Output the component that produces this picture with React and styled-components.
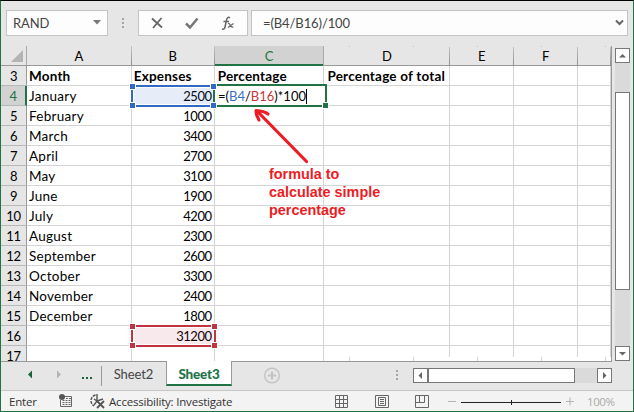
import React from 'react';
import styled, { createGlobalStyle } from 'styled-components';

const GREEN = '#217346';

const GlobalStyle = createGlobalStyle`
  * { box-sizing: border-box; }
  body { margin: 0; overflow: hidden; }
`;

const Window = styled.div`
  width: 634px;
  height: 412px;
  display: flex;
  flex-direction: column;
  background: #e6e6e6;
  border: 1px solid ${GREEN};
  border-top-color: #000;
  font-family: Lato, sans-serif;
  font-size: 13px;
  color: #000;
  white-space: nowrap;
`;

const FormulaBar = styled.div`
  display: flex;
  height: 45px;
  padding: 9px 4px 9px 5px;
  color: #444;
`;

const Field = styled.div`
  display: flex;
  align-items: center;
  justify-content: space-between;
  width: ${(p) => p.$width}px;
  height: 26px;
  padding: ${(p) => p.$padding};
  margin-left: ${(p) => p.$gap || 0}px;
  background: #fdfdfd;
  border: 1px solid #c3c3c3;
  letter-spacing: ${(p) => p.$spacing || 0}px;
`;

const Grip = styled.div`
  display: flex;
  flex-direction: column;
  gap: 2px;
  width: 30px;
  padding: ${(p) => p.$padding};
  i { width: 2px; height: 2px; background: #a6a6a6; }
`;

const Main = styled.div`
  display: flex;
  height: 315px;
`;

const Sheet = styled.div`
  position: relative;
  width: 611px;
  height: 315px;
  overflow: hidden;
  border-right: 1px solid #999;
`;

const HeaderRow = styled.div`
  display: flex;
  height: 20px;
  line-height: 20px;
  border-bottom: 1px solid #999;
`;

const Corner = styled.div`
  width: 26px;
  height: 19px;
  border-right: 1px solid #aaa;
  svg { display: block; }
`;

const ColumnHead = styled.div`
  width: ${(p) => p.$width}px;
  height: ${(p) => (p.$active ? 20 : 19)}px;
  text-align: center;
  color: ${(p) => (p.$active ? GREEN : '#000')};
  background: ${(p) => (p.$active ? '#d2d2d2' : '#e6e6e6')};
  border-right: 1px solid;
  border-image: linear-gradient(#c8c8c8, #8c8c8c) 1;
  ${(p) => p.$active && `border-image: none; border-right-color: #aaa; box-shadow: inset 0 -2px ${GREEN};`}
`;

const Row = styled.div`
  display: flex;
  height: 20px;
  line-height: 21px;
`;

const RowHead = styled.div`
  width: 26px;
  text-align: center;
  letter-spacing: -0.4px;
  color: ${(p) => (p.$active ? GREEN : '#000')};
  background: ${(p) => (p.$active ? '#d2d2d2' : '#e6e6e6')};
  border-right: ${(p) => (p.$active ? `2px solid ${GREEN}` : '1px solid #999')};
  border-bottom: 1px solid #b8b8b8;
`;

const Cell = styled.div`
  width: ${(p) => p.$width}px;
  padding: 0 2px;
  overflow: hidden;
  background: #fff;
  border-right: 1px solid #d4d4d4;
  border-bottom: 1px solid #d4d4d4;
  text-align: ${(p) => (p.$number ? 'right' : 'left')};
  font-weight: ${(p) => (p.$bold ? 700 : 400)};
  font-size: ${(p) => (p.$number ? 13 : 13.5)}px;
  letter-spacing: ${(p) => (p.$number ? -0.45 : p.$bold ? 0.2 : 0.27)}px;
  &:nth-child(n + 4) { padding-left: 3px; }
`;

const RangeFrame = styled.div`
  position: absolute;
  left: 130px;
  top: ${(p) => p.$top}px;
  width: 85px;
  height: 22px;
  border: 2px solid ${(p) => p.$color};
  box-shadow: ${(p) => (p.$open ? 'none' : 'inset 0 0 0 1px #fff')};
  background: ${(p) => p.$tint} padding-box;
  ${(p) => p.$open && `
    width: 84px;
    border-right-color: transparent;
    box-shadow: inset 1px 1px #fff, inset 0 -1px #fff;
  `}
`;

const Handle = styled.i`
  position: absolute;
  width: 5px;
  height: 5px;
  background: ${(p) => p.$color};
  outline: 1px solid #fff;
  ${(p) => p.$v}: -3px;
  ${(p) => p.$h}: -3px;
`;

const Editor = styled.div`
  position: absolute;
  left: 212px;
  top: 38px;
  width: 114px;
  height: 23px;
  padding-left: 3px;
  border: 2px solid ${GREEN};
  background: #fff;
  line-height: 20px;
`;

const Ref = styled.span`
  color: ${(p) => p.$color};
`;

const Caret = styled.i`
  display: inline-block;
  width: 1px;
  height: 15px;
  background: #000;
  vertical-align: -3px;
`;

const EdgeStrip = styled.div`
  position: absolute;
  left: 324px;
  width: 286px;
  height: ${(p) => p.$height}px;
  ${(p) => p.$edge}: 0;
  background: repeating-linear-gradient(90deg, transparent 0 24px, ${(p) => p.$tick} 24px 25px, transparent 25px 64px), ${(p) => p.$fill};
`;

const Note = styled.div`
  position: absolute;
  left: 268px;
  top: 119px;
  color: #ed1c24;
  font: bold 14.4px/18px "Liberation Sans", Arial, sans-serif;
`;

const Arrow = styled.svg`
  position: absolute;
  left: 250px;
  top: 60px;
`;

const VerticalScroll = styled.div`
  display: flex;
  flex-direction: column;
  width: 15px;
  height: 315px;
  margin-left: 3px;
  padding-top: 2px;
`;

const ScrollButton = styled.div`
  display: flex;
  align-items: center;
  justify-content: center;
  flex: none;
  width: 15px;
  height: 15px;
  border: 1px solid #777;
  background: #fff;
`;

const Track = styled.div`
  flex: 1;
  background: #dadada;
  padding: ${(p) => p.$padding};
`;

const Thumb = styled.div`
  width: ${(p) => p.$width}px;
  height: ${(p) => p.$height}px;
  background: #fff;
  border: 1px solid #777;
`;

const TabBar = styled.div`
  display: flex;
  height: 29px;
  border-top: 1px solid #999;
  width: 611px;
`;

const TabNav = styled.div`
  width: 100px;
  height: 28px;
  svg { display: block; }
`;

const Tab = styled.div`
  width: ${(p) => p.$width}px;
  height: ${(p) => (p.$active ? 25 : 28)}px;
  margin-top: ${(p) => (p.$active ? -1 : 0)}px;
  line-height: ${(p) => (p.$active ? 26 : 25)}px;
  text-align: center;
  color: ${(p) => (p.$active ? GREEN : '#444')};
  font-weight: ${(p) => (p.$active ? 900 : 400)};
  font-size: ${(p) => (p.$active ? 13.5 : 13)}px;
  letter-spacing: ${(p) => (p.$active ? -0.2 : -0.1)}px;
  ${(p) => p.$active && `
    background: #fff;
    border-left: 1px solid #999;
    border-right: 1px solid #999;
    border-bottom: 2px solid ${GREEN};
  `}
`;

const AddSheet = styled.div`
  width: 151px;
  padding: 5px 0 0 32px;
`;

const HorizontalScroll = styled.div`
  display: flex;
  height: 15px;
  margin-top: 6px;
  width: 199px;
`;

const StatusBar = styled.div`
  display: flex;
  align-items: center;
  height: 21px;
  background: #f3f3f3;
  border-top: 1px solid #c6c6c6;
  font: 11.5px "Open Sans", "Noto Sans", sans-serif;
`;

const StatusText = styled.span`
  width: ${(p) => p.$width}px;
  padding-left: ${(p) => p.$left || 0}px;
  letter-spacing: ${(p) => p.$spacing}px;
  color: ${(p) => p.$color || '#333'};
`;

const StatusIcon = styled.svg`
  flex: none;
  margin-right: ${(p) => p.$right || 0}px;
`;

const COLUMNS = [
  ['A', 105], ['B', 83], ['C', 110], ['D', 126], ['E', 64], ['F', 64], ['', 33],
];

const ROWS = [
  [3, 'Month', 'Expenses', 'Percentage', 'Percentage of total'],
  [4, 'January', 2500],
  [5, 'February', 1000],
  [6, 'March', 3400],
  [7, 'April', 2700],
  [8, 'May', 3100],
  [9, 'June', 1900],
  [10, 'July', 4200],
  [11, 'August', 2300],
  [12, 'September', 2600],
  [13, 'October', 3300],
  [14, 'November', 2400],
  [15, 'December', 1800],
  [16, '', 31200],
  [17],
];

const Handles = ({ color }) =>
  ['top', 'bottom'].map((v) => ['left', 'right'].map((h) => <Handle key={v + h} $v={v} $h={h} $color={color} />));

const Triangle = ({ dir }) => (
  <svg width="9" height="9" viewBox="0 0 9 9" fill="#666">
    <path d={{ up: 'M1 6.5h7L4.5 3z', down: 'M1 3h7L4.5 6.5z', left: 'M6 1v7L2.5 4.5z', right: 'M3 1v7l3.5-3.5z' }[dir]} />
  </svg>
);

const Dots = ({ padding }) => <Grip $padding={padding}><i /><i /><i /></Grip>;

export default function App() {
  return (
    <Window>
      <GlobalStyle />
      <FormulaBar>
        <Field $width={102} $padding="0 6px" $spacing={-0.1}>
          <span>RAND</span>
          <svg width="8" height="6"><path d="M0 0h8L4 4.5z" fill="#777" /></svg>
        </Field>
        <Dots padding="8px 0 0 14px" />
        <Field $width={110} $padding="0 12px">
          <svg width="12" height="12" fill="none" stroke="#666"><path d="M1 1.5L11 10.500M10.500 1L2 11" strokeWidth="1.8" /></svg>
          <svg width="14" height="12" fill="none" stroke="#777"><path d="M1 6.500L5 10.500L12.500 1.500" strokeWidth="2.5" /></svg>
          <svg width="14" height="15" fill="none" stroke="#666">
            <path d="M9 1.800C7 .5 5.800 2 5.300 5L4 11Q3.300 14 1 13M2.500 5.500H8" strokeWidth="1.500" />
            <path d="M7 7.500Q8.500 7 9.200 9.200T12.500 11M12.500 7.500L7 11.500" strokeWidth="1.200" />
          </svg>
        </Field>
        <Field $width={377} $gap={3} $padding="0 3px 0 11px" $spacing={-0.1}>
          <span>=(B4/B16)/100</span>
          <svg width="9" height="8" fill="none" stroke="#666" strokeWidth="2"><path d="M1 1.500L4.500 5L8 1.500" /></svg>
        </Field>
      </FormulaBar>

      <Main>
        <Sheet>
          <HeaderRow>
            <Corner><svg width="25" height="19"><path d="M22 4V16H10z" fill="#b4b4b4" /></svg></Corner>
            {COLUMNS.map(([name, width], i) => (
              <ColumnHead key={i} $width={width} $active={name === 'C'}>{name}</ColumnHead>
            ))}
          </HeaderRow>
          {ROWS.map(([number, ...values]) => (
            <Row key={number}>
              <RowHead $active={number === 4}>{number}</RowHead>
              {COLUMNS.map(([, width], i) => (
                <Cell key={i} $width={width} $bold={number === 3} $number={typeof values[i] === 'number'}>
                  {values[i]}
                </Cell>
              ))}
            </Row>
          ))}
          <EdgeStrip $edge="top" $height={1} $tick="#c4c4c4" $fill="#e6e6e6" />
          <EdgeStrip $edge="bottom" $height={4} $tick="#d4d4d4" $fill="#fff" />
          <Editor>
            =(<Ref $color="#3a6fc9">B4</Ref>/<Ref $color="#c8353d">B16</Ref>)*100<Caret />
            <Handle $v="bottom" $h="right" $color={GREEN} />
          </Editor>
          <RangeFrame $top={39} $color="#316ac5" $tint="rgba(49,106,197,.12)" $open><Handles color="#316ac5" /></RangeFrame>
          <RangeFrame $top={279} $color="#be3440" $tint="rgba(190,52,64,.1)"><Handles color="#be3440" /></RangeFrame>
          <Arrow width="65" height="60" fill="none" stroke="#ed1c24" strokeWidth="3.200" strokeLinecap="round" strokeLinejoin="round">
            <path d="M55.500 55.500L6 5M17 8Q13 5 5 4.500Q5 9 8 14" />
          </Arrow>
          <Note>formula to<br />calculate simple<br />percentage</Note>
        </Sheet>
        <VerticalScroll>
          <ScrollButton><Triangle dir="up" /></ScrollButton>
          <Track $padding="29px 0 0"><Thumb $width={15} $height={198} /></Track>
          <ScrollButton><Triangle dir="down" /></ScrollButton>
        </VerticalScroll>
      </Main>

      <TabBar>
        <TabNav>
          <svg width="101" height="28">
            <path d="M31 8.500v8L27 12.500z" fill="#17633a" />
            <path d="M56 8.500v8L60 12.500z" fill="#b4b4b4" />
            <path d="M81 15h2v2h-2zM85 15h2v2h-2zM89 15h2v2h-2z" fill="#17633a" />
            <path d="M100.500 4v20" stroke="#999" />
          </svg>
        </TabNav>
        <Tab $width={65}>Sheet2</Tab>
        <Tab $width={66} $active>Sheet3</Tab>
        <AddSheet>
          <svg width="17" height="17" fill="none" stroke="#c3c3c3">
            <circle cx="8" cy="8.500" r="7.300" strokeWidth="1.400" /><path d="M4 8.500h8M8 4.500v8" strokeWidth="2" />
          </svg>
        </AddSheet>
        <Dots padding="8px 0 0 13px" />
        <HorizontalScroll>
          <ScrollButton><Triangle dir="left" /></ScrollButton>
          <Track><Thumb $width={147} $height={15} /></Track>
          <ScrollButton><Triangle dir="right" /></ScrollButton>
        </HorizontalScroll>
      </TabBar>

      <StatusBar>
        <StatusText $width={58} $left={8} $spacing={-0.2}>Enter</StatusText>
        <StatusIcon $right={16} width="14" height="14">
          <path d="M5 2.500H12.500V12.500H1.500V6" fill="#f3f3f3" stroke="#666" />
          <circle cx="3" cy="3" r="3" fill="#555" />
          <path d="M7 4.500h5M3.500 6.500h8M3.500 8.500h8M3.500 10.500h8" stroke="#666" strokeDasharray="2 1" />
        </StatusIcon>
        <StatusIcon $right={3} width="17" height="16" fill="none" stroke="#555">
          <path d="M6.500 2A6 6 0 0 0 5 13" strokeDasharray="3 1" strokeWidth="1.400" />
          <path d="M8 1v7M5 6l3 2 6-2M8 8L5 12" strokeWidth="1.400" />
          <path d="M8 8L15 15M15 8L8 15" strokeWidth="1.800" />
        </StatusIcon>
        <StatusText $width={226} $spacing={-0.2}>Accessibility: Investigate</StatusText>
        <StatusIcon $right={27} width="13" height="13" fill="none" stroke="#666">
          <path d="M.5.5h12v12H.5zM4.500.5v12M8.500.5v12M.5 4.500h12M.5 8.500h12" />
        </StatusIcon>
        <StatusIcon $right={26} width="14" height="13" fill="none" stroke="#666">
          <path d="M.5.5h13v12H.5zM3.500 2.500h7v8h-7zM5 4.500h4M5 6.500h4M5 8.500h4" />
        </StatusIcon>
        <StatusIcon $right={19} width="14" height="13" fill="none" stroke="#666">
          <path d="M.5.5h13v12H.5zM4.500.5v7M9.500.5v7M.5 7.500h9" />
        </StatusIcon>
        <StatusIcon $right={13} width="126" height="13" fill="none" stroke="#b4b4b4">
          <path d="M0 6.500h8M118 6.500h8M122 2.500v8" />
          <path d="M13 7.500h100M63.500 5v5" stroke="#222" />
        </StatusIcon>
        <StatusText $width={40} $spacing={-0.4} $color="#aaa">100%</StatusText>
      </StatusBar>
    </Window>
  );
}
